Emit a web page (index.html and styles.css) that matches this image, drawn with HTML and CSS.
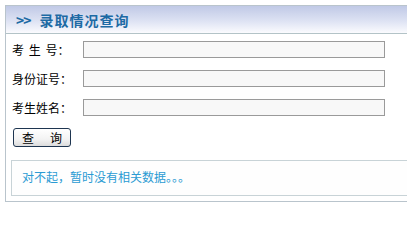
FILE: index.html
```html
<!DOCTYPE html>
<html lang="zh">
<head>
<meta charset="utf-8">
<title>录取情况查询</title>
<link rel="stylesheet" href="styles.css">
</head>
<body>
<div class="panel">
  <div class="panel-head">
    <span class="arrows">&gt;&gt;</span><span class="title">录取情况查询</span>
  </div>
  <div class="panel-body">
    <div class="row">
      <label class="label spaced">考 生 号：</label>
      <input class="field" type="text">
    </div>
    <div class="row">
      <label class="label">身份证号：</label>
      <input class="field" type="text">
    </div>
    <div class="row">
      <label class="label">考生姓名：</label>
      <input class="field" type="text">
    </div>
    <div class="actions">
      <button class="btn" type="button">查　询</button>
    </div>
    <div class="message">对不起，暂时没有相关数据。。。</div>
  </div>
</div>
</body>
</html>
```
FILE: styles.css
```css
html, body {
  margin: 0;
  padding: 0;
  background: #ffffff;
}
body {
  font-family: "Noto Sans CJK SC", "Noto Sans", sans-serif;
  font-size: 12px;
  color: #000;
}
.panel {
  margin: 5px 0 0 5px;
  border: 1px solid #b9c4cc;
  border-right: none;
}
.panel-head {
  height: 27px;
  border-bottom: 1px solid #b3c3c7;
  background: linear-gradient(to bottom, #c0c9e6 0%, #dde2f3 55%, #fbfbfe 100%);
  display: flex;
  align-items: center;
  padding-left: 10px;
  color: #1d6aa4;
  font-weight: bold;
  font-size: 14px;
}
.arrows {
  margin-right: 9px;
  letter-spacing: -1px;
}
.title {
  letter-spacing: 1px;
}
.panel-body {
  padding: 7px 0 5px 6px;
}
.row {
  display: flex;
  align-items: center;
  height: 17px;
  margin-bottom: 12px;
}
.label {
  width: 71px;
  flex: none;
  line-height: 17px;
  white-space: pre;
}
.spaced {
  word-spacing: 2px;
}
.field {
  width: 302px;
  height: 17px;
  box-sizing: border-box;
  margin: 0;
  padding: 0 2px;
  border: 1px solid #9a9a9a;
  background: #f8f8f8;
  font: inherit;
}
.actions {
  padding-left: 1px;
}
.btn {
  width: 58px;
  height: 19px;
  box-sizing: border-box;
  margin: 0;
  padding: 0 0 0 2px;
  border: 1px solid #1e3550;
  border-radius: 3px;
  background: linear-gradient(to bottom, #ffffff 0%, #f3f3f3 60%, #dcdcdc 100%);
  font-family: "Noto Sans CJK SC", "Noto Sans", sans-serif;
  font-size: 12px;
  line-height: 17px;
  letter-spacing: 2px;
  color: #000;
  display: block;
}
.message {
  margin: 13px 0 0 -1px;
  height: 36px;
  box-sizing: border-box;
  border: 1px solid #c8d3d7;
  border-right: none;
  padding: 7px 0 0 10px;
  line-height: 18px;
  color: #2b9bd3;
  background: #fefefe;
}
```
